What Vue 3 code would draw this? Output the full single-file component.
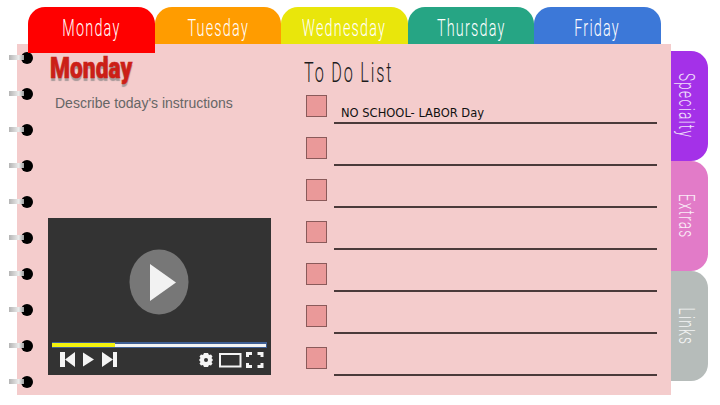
<script setup>
const days = [
  { name: 'Monday', color: '#ff0000', active: true },
  { name: 'Tuesday', color: '#ff9c00' },
  { name: 'Wednesday', color: '#e9e60b' },
  { name: 'Thursday', color: '#26a584' },
  { name: 'Friday', color: '#3c78d8' }
]
const sideTabs = [
  { name: 'Specialty', color: '#a431e8' },
  { name: 'Extras', color: '#e27bc8' },
  { name: 'Links', color: '#b6bcba' }
]
const rings = Array.from({ length: 10 }, (_, i) => i)
const todos = ['NO SCHOOL- LABOR Day', '', '', '', '', '', '']
</script>

<template>
  <div class="screen">
    <div class="tabs">
      <div
        v-for="d in days"
        :key="d.name"
        class="tab"
        :class="{ active: d.active }"
        :style="{ background: d.color }"
      >
        <span class="thin">{{ d.name }}</span>
      </div>
    </div>

    <div class="body">
      <div class="page">
        <div class="left">
          <h1 class="heading">Monday</h1>
          <p class="desc">Describe today's instructions</p>
          <svg class="video" width="223" height="157" viewBox="0 0 223 157">
            <rect width="223" height="157" fill="#333333" />
            <ellipse cx="111" cy="64" rx="29.500" ry="32.500" fill="#777777" />
            <path d="M102 46 L128 64.500 L102 83 Z" fill="#f2f2f2" />
            <rect x="4" y="124" width="215" height="6" fill="#3f5f94" />
            <rect x="5" y="126" width="213" height="3" fill="#f4f4f4" />
            <rect x="4" y="125" width="63" height="4" fill="#f2f20f" />
            <g fill="#f4f4f4">
              <rect x="12" y="134" width="5" height="15" />
              <path d="M17 141.500 L27 134 V149 Z" />
              <path d="M35 134.500 L46 141.500 L35 148.500 Z" />
              <path d="M54 134 L65 141.500 L54 149 Z" />
              <rect x="65" y="134" width="4" height="15" />
              <path d="M156 135 H160 L161 137 L163 136.500 L164.500 138.500 L163.500 140 L165 142 L163.500 144 L164.500 145.500 L163 147.500 L161 147 L160 149 H156 L155 147 L153 147.500 L151.500 145.500 L152.500 144 L151 142 L152.500 140 L151.500 138.500 L153 136.500 L155 137 Z" />
            </g>
            <circle cx="158" cy="142" r="2" fill="#333333" />
            <rect x="172" y="136" width="20.500" height="12.500" fill="none" stroke="#f4f4f4" stroke-width="2" />
            <path
              d="M199.500 139 V135.500 H204 M209.500 135.500 H214 V139 M214 145 V148.500 H209.500 M204 148.500 H199.500 V145"
              fill="none"
              stroke="#f4f4f4"
              stroke-width="3"
            />
          </svg>
        </div>

        <div class="right">
          <h2 class="todo-title"><span class="thin">To Do List</span></h2>
          <div v-for="(t, i) in todos" :key="i" class="todo">
            <span class="check"></span>
            <span class="line">{{ t }}</span>
          </div>
        </div>
      </div>

      <div class="side">
        <div v-for="s in sideTabs" :key="s.name" class="side-tab" :style="{ background: s.color }">
          <span class="side-label">{{ s.name }}</span>
        </div>
      </div>

      <div class="rings">
        <svg v-for="r in rings" :key="r" width="26" height="14" viewBox="0 0 26 14">
          <defs>
            <linearGradient :id="'wire' + r" x1="0" y1="0" x2="1" y2="0">
              <stop offset="0" stop-color="#b4b4b4" />
              <stop offset="0.65" stop-color="#ececec" />
              <stop offset="1" stop-color="#a0a0a0" />
            </linearGradient>
          </defs>
          <circle cx="20" cy="7" r="6" fill="#000000" />
          <rect x="2" y="4" width="15" height="5" :fill="'url(#wire' + r + ')'" />
        </svg>
      </div>
    </div>
  </div>
</template>

<style scoped>
.screen {
  width: 720px;
  height: 405px;
  overflow: hidden;
  background: #ffffff;
  font-family: "Liberation Sans", Arial, sans-serif;
}
.tabs {
  display: flex;
  padding: 7px 0 0 28px;
  height: 37px;
}
.tab {
  width: 126.500px;
  height: 37px;
  border-radius: 17px 17px 0 0;
  display: flex;
  justify-content: center;
  padding-top: 7px;
  box-sizing: border-box;
  color: #ffffff;
  font-size: 24px;
}
.tab.active {
  height: 46px;
  position: relative;
  z-index: 2;
}
.thin {
  display: inline-block;
  font-family: Roboto, "Liberation Sans", sans-serif;
  font-weight: 300;
  letter-spacing: 2px;
  transform: scaleX(0.6);
  white-space: nowrap;
  line-height: 28px;
}
.body {
  position: relative;
  display: flex;
  padding-left: 17px;
}
.page {
  width: 654px;
  height: 351px;
  background: #f4cccc;
  display: flex;
}
.left {
  width: 287px;
  padding-left: 31px;
  box-sizing: border-box;
}
.heading {
  margin: 9px 0 0 2px;
  height: 30px;
  font-family: Roboto, sans-serif;
  font-weight: 900;
  font-size: 30px;
  line-height: 30px;
  color: #cc1f17;
  -webkit-text-stroke: 0.600px #cc1f17;
  text-shadow: 0 3px 1px #a89a9a;
  transform: scaleX(0.76);
  transform-origin: left center;
}
.desc {
  margin: 12px 0 0 7px;
  font-size: 14px;
  line-height: 16px;
  color: #666666;
}
.video {
  display: block;
  margin-top: 107px;
}
.right {
  flex: 1;
}
.todo-title {
  margin: 14px 0 0;
  height: 28px;
  color: #1c1c1c;
  font-size: 27px;
  font-weight: 400;
}
.todo-title .thin {
  letter-spacing: 3px;
  transform-origin: left center;
}
.todo {
  display: flex;
  align-items: flex-end;
  height: 42px;
  margin-left: 2px;
}
.todo:first-of-type {
  margin-top: 1px;
}
.check {
  width: 21px;
  height: 22px;
  box-sizing: border-box;
  background: #ea9999;
  border: 1px solid #8a5a5a;
  margin: 0 7px 12px 0;
}
.line {
  width: 323px;
  height: 22px;
  box-sizing: border-box;
  border-bottom: 2px solid #4a3a3a;
  font-family: "DejaVu Sans", sans-serif;
  font-size: 11.500px;
  line-height: 22px;
  padding-left: 7px;
  color: #111111;
  margin-bottom: 5px;
}
.side {
  display: flex;
  flex-direction: column;
  padding-top: 7px;
}
.side-tab {
  width: 37px;
  height: 110px;
  border-radius: 0 17px 17px 0;
  display: flex;
  justify-content: center;
  align-items: center;
  color: #ffffff;
}
.side-label {
  writing-mode: vertical-rl;
  margin-left: -8px;
  font-family: Roboto, sans-serif;
  font-weight: 300;
  font-size: 22px;
  letter-spacing: 2px;
  line-height: 26px;
  white-space: nowrap;
  transform: scaleY(0.62);
  opacity: 0.85;
}
.rings {
  position: absolute;
  left: 7px;
  top: 7px;
  display: flex;
  flex-direction: column;
  gap: 22px;
}
.rings svg {
  display: block;
}
</style>
